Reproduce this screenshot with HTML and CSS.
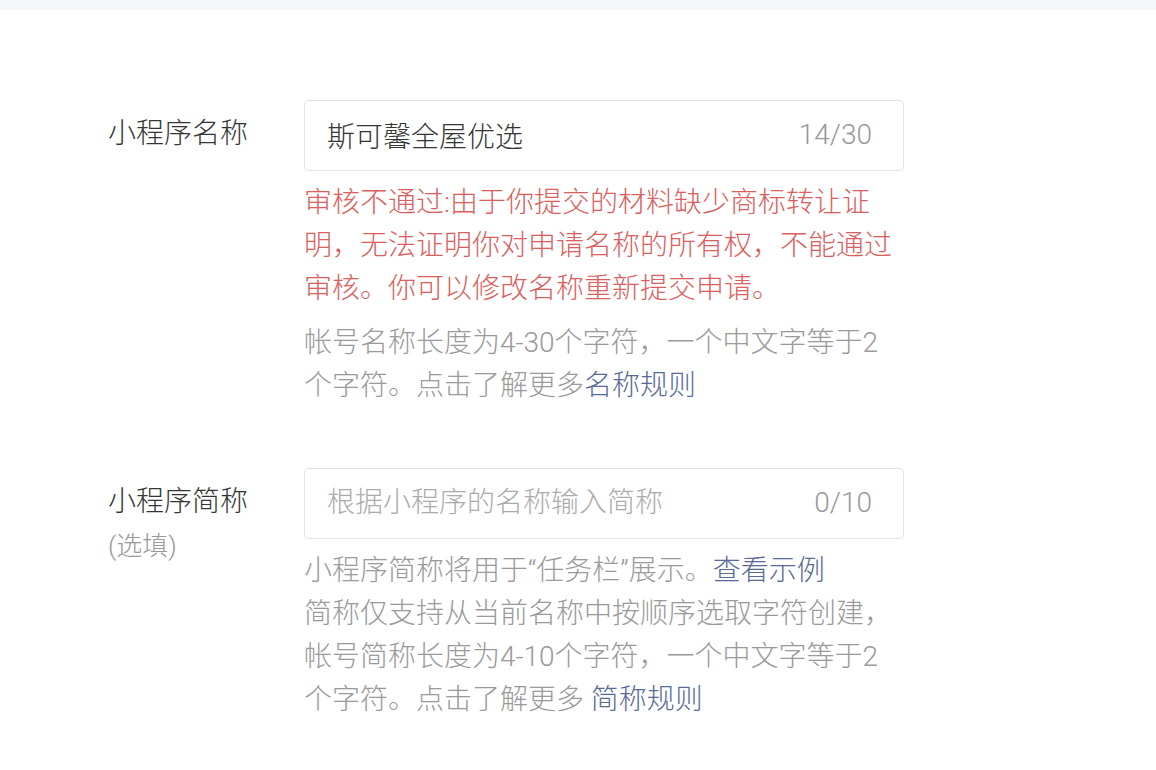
FILE: index.html
```html
<!DOCTYPE html>
<html lang="zh-CN">
<head>
    <meta charset="utf-8">
    <meta name="viewport" content="width=device-width, initial-scale=1">
    <title>小程序信息</title>
    <link rel="stylesheet" href="styles.css">
</head>
<body>
    <div class="top-bar"></div>

    <div class="form">
        <div class="form-row">
            <label class="form-label" for="appName">小程序名称</label>
            <div class="form-field">
                <div class="input-box">
                    <input type="text" class="input-text" id="appName" value="斯可馨全屋优选">
                    <span class="input-count">14/30</span>
                </div>
                <p class="tips-error">审核不通过:由于你提交的材料缺少商标转让证明，无法证明你对申请名称的所有权，不能通过审核。你可以修改名称重新提交申请。</p>
                <p class="tips">帐号名称长度为4-30个字符，一个中文字等于2个字符。点击了解更多<a href="#" class="link">名称规则</a></p>
            </div>
        </div>

        <div class="form-row">
            <label class="form-label" for="appShort">小程序简称<span class="form-label-sub">(选填)</span></label>
            <div class="form-field">
                <div class="input-box">
                    <input type="text" class="input-text" id="appShort" placeholder="根据小程序的名称输入简称">
                    <span class="input-count">0/10</span>
                </div>
                <p class="tips tips-first">小程序简称将用于“任务栏”展示。<a href="#" class="link">查看示例</a><br>简称仅支持从当前名称中按顺序选取字符创建，帐号简称长度为4-10个字符，一个中文字等于2个字符。点击了解更多 <a href="#" class="link">简称规则</a></p>
            </div>
        </div>
    </div>
</body>
</html>
```

FILE: styles.css
```css
body{
    margin:0;
    background:#fff;
    font-family:Roboto, "Noto Sans CJK SC", sans-serif;
    font-weight:300;
    color:#353535;
}
.top-bar{
    height:10px;
    background:#f6f7f9;
}
.form{
    padding:90px 0 0 108px;
}
.form-row{
    display:flex;
    margin-bottom:61px;
}
.form-label{
    width:196px;
    flex-shrink:0;
    font-size:28px;
    line-height:43px;
    padding-top:12px;
}
.form-label-sub{
    display:block;
    font-size:26px;
    color:#999;
    margin-top:2px;
}
.form-field{
    width:600px;
}
.input-box{
    display:flex;
    align-items:center;
    height:71px;
    box-sizing:border-box;
    border:1px solid #e2e2e6;
    border-radius:5px;
    padding:0 31px 2px 22px;
}
.input-text{
    flex:1;
    min-width:0;
    border:none;
    outline:none;
    padding:0;
    background:transparent;
    font:300 28px Roboto, "Noto Sans CJK SC", sans-serif;
    color:#353535;
}
.input-text::placeholder{
    color:#ababab;
}
.input-count{
    font-size:28px;
    color:#999;
}
.tips-error, .tips{
    margin:0;
    font-size:28px;
    line-height:43px;
}
.tips-error{
    color:#da6060;
    margin-top:10px;
}
.tips{
    color:#9a9a9a;
    margin-top:11px;
}
.tips-first{
    margin-top:10px;
}
.link{
    color:#576b95;
    text-decoration:none;
}
```
